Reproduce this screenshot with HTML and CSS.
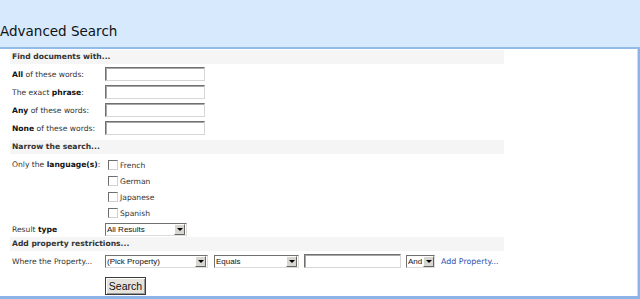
FILE: index.html
```html
<html>
<head>
<title>Advanced Search</title>
<link rel="stylesheet" href="styles.css">
</head>
<body>
<div class="header">
<h1>Advanced Search</h1>
</div>

<div class="page">
<div class="form">
<div class="band">Find documents with...</div>
<div class="row"><span class="lbl"><b>All</b> of these words:</span><input type="text" class="txt"></div>
<div class="row"><span class="lbl">The exact <b>phrase</b>:</span><input type="text" class="txt"></div>
<div class="row"><span class="lbl"><b>Any</b> of these words:</span><input type="text" class="txt"></div>
<div class="row"><span class="lbl"><b>None</b> of these words:</span><input type="text" class="txt"></div>

<div class="band gap">Narrow the search...</div>
<div class="langs">
<span class="lbl">Only the <b>language(s)</b>:</span>
<div class="checks">
<label class="check"><input type="checkbox"> French</label>
<label class="check"><input type="checkbox"> German</label>
<label class="check"><input type="checkbox"> Japanese</label>
<label class="check"><input type="checkbox"> Spanish</label>
</div>
</div>
<div class="row short"><span class="lbl">Result <b>type</b></span><span class="combo w-type"><span class="val">All Results</span><span class="drop"></span></span></div>

<div class="band">Add property restrictions...</div>
<div class="row"><span class="lbl">Where the Property...</span>
<span class="combo w-prop"><span class="val">(Pick Property)</span><span class="drop"></span></span>
<span class="combo w-op"><span class="val">Equals</span><span class="drop"></span></span>
<input type="text" class="txt value">
<span class="combo w-and"><span class="val">And</span><span class="drop"></span></span>
<a href="#" class="add">Add Property...</a>
</div>
<div class="buttons"><button type="submit">Search</button></div>
</div>
</div>
</body>
</html>
```

FILE: styles.css
```css
body {
    margin: 0;
    padding: 0;
    background: #fff;
    font-family: "DejaVu Sans", Verdana, sans-serif;
    font-size: 7.6px;
    color: #333;
}

.header {
    height: 47px;
    background: #d6e9fd;
    border-bottom: 2px solid #93bbea;
}

.header h1 {
    margin: 0;
    padding-top: 23px;
    font-size: 13.5px;
    font-weight: normal;
    color: #111;
    line-height: 16px;
}

.page {
    height: 247px;
    border-right: 2px solid #8db4e8;
    border-bottom: 3px solid #8db4e8;
    box-shadow: inset -1px 0 #d8d8d8;
}

.form {
    margin-left: 10px;
    width: 494px;
    padding-top: 1px;
}

.band {
    height: 14px;
    line-height: 14px;
    padding-left: 2px;
    margin-bottom: 1px;
    background: #f5f5f5;
    font-weight: bold;
    color: #333;
}

.band.gap {
    margin-top: 3px;
    margin-bottom: 3px;
}

.row {
    display: flex;
    align-items: center;
    height: 18px;
    gap: 5px;
}

.row.short {
    height: 16px;
}

.lbl {
    width: 93px;
    padding-left: 2px;
    flex-shrink: 0;
    margin-right: -5px;
    white-space: nowrap;
}

.lbl b {
    color: #111;
}

.txt {
    width: 100px;
    height: 14px;
    box-sizing: border-box;
    margin: 0;
    padding: 0 2px;
    border: 1px solid;
    border-color: #707070 #d6d6d6 #d6d6d6 #707070;
    box-shadow: inset 1px 1px #a8a8a8;
    font-size: 9px;
}

.txt.value {
    width: 97px;
}

.langs {
    display: flex;
}

.langs .lbl {
    height: 16px;
    line-height: 16px;
    margin-right: 0;
}

.checks {
    display: flex;
    flex-direction: column;
    padding-left: 3px;
}

.check {
    display: flex;
    align-items: center;
    height: 16px;
    gap: 2px;
}

.check input {
    appearance: none;
    width: 10px;
    height: 10px;
    margin: 0;
    box-sizing: border-box;
    border: 1px solid;
    border-color: #6f6f6f #d0d0d0 #d0d0d0 #6f6f6f;
    background: #fff;
}

.combo {
    display: inline-flex;
    align-items: stretch;
    height: 13px;
    box-sizing: border-box;
    border: 1px solid;
    border-color: #707070 #dcdcdc #dcdcdc #707070;
    background: #fff;
    font-family: "Liberation Sans", Arial, sans-serif;
    font-size: 8px;
    color: #111;
}

.combo .val {
    flex: 1;
    line-height: 11px;
    padding-left: 1px;
    white-space: nowrap;
    overflow: hidden;
}

.combo .drop {
    width: 11px;
    margin: 0 1px 0 0;
    background: #d8d6d0;
    border: 1px solid;
    border-color: #fff #666 #666 #fff;
    box-sizing: border-box;
    display: flex;
    align-items: center;
    justify-content: center;
}

.combo .drop::after {
    content: "";
    border-left: 3px solid transparent;
    border-right: 3px solid transparent;
    border-top: 3px solid #000;
}

.w-type { width: 82px; }
.w-prop { width: 103px; }
.w-op { width: 85px; margin-left: 1px; }
.w-and { width: 29px; }
.w-and .drop { margin-right: 0; }

.add {
    color: #2f52b2;
    text-decoration: none;
    margin-left: 1px;
    font-size: 7.9px;
}

.buttons {
    padding: 7px 0 0 95px;
}

button {
    width: 41px;
    height: 18px;
    padding: 0;
    font-family: "Liberation Sans", Arial, sans-serif;
    font-size: 10.5px;
    color: #111;
    background: #e6e3dc;
    border: 1px solid #3c3c3c;
    box-shadow: inset 1px 1px #fff, inset -1px -1px #9a9a9a;
}
```
